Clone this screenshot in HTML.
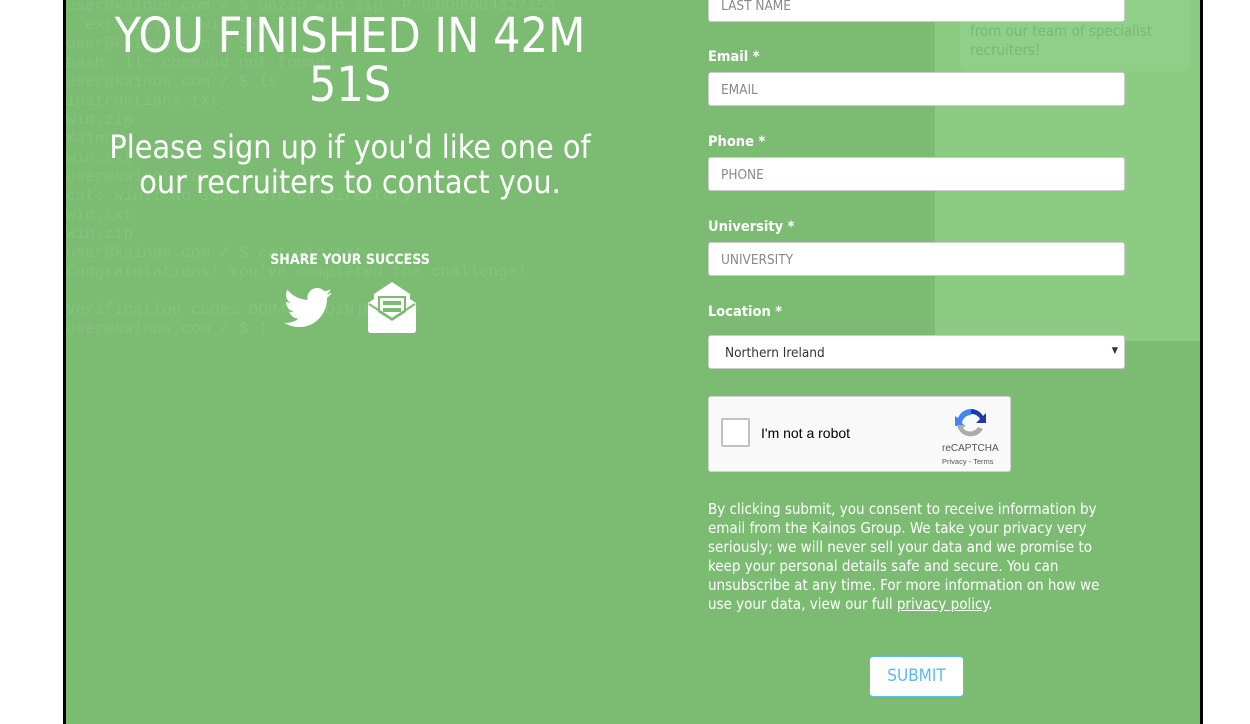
<!DOCTYPE html>
<html><head><meta charset="utf-8"><style>
*{box-sizing:border-box;margin:0;padding:0}
body{width:1250px;height:724px;background:#fff;position:relative;overflow:hidden;font-family:"DejaVu Sans Condensed","Liberation Sans",sans-serif}
#main{position:absolute;left:63px;top:0;width:1140px;height:724px;background:#7bbb72;border-left:3px solid #000;border-right:3px solid #000}
#panel{position:absolute;left:935px;top:0;width:265px;height:341px;background:#8bcb82}
#box{position:absolute;left:960px;top:-20px;width:230px;height:91px;background:#90cf87;border-radius:8px;color:#7bb872;font-size:15px;line-height:19px;padding:23px 10px 0}
#term{position:absolute;left:66px;top:-3px;font-family:"Liberation Mono",monospace;font-size:16px;line-height:19px;color:rgba(255,255,255,.09);white-space:pre}
.c{position:absolute;left:66px;width:568px;text-align:center;color:#fff}
h1{font-weight:normal;font-size:48px;line-height:49px;top:12px}
.sub{font-size:32px;line-height:35px;top:130px}
.share{top:252px;font-size:14px;font-weight:bold}
label{position:absolute;left:708px;color:#fff;font-weight:bold;font-size:14.5px}
.in{position:absolute;left:708px;width:417px;height:34px;background:#fff;border:1px solid #ccc;border-radius:3px;color:#888;font-size:13.5px;padding:9px 12px}
.cap{position:absolute;left:708px;top:396px;width:303px;height:76px;background:#f9f9f9;border:1px solid #d3d3d3;border-radius:3px;font-family:"Liberation Sans",sans-serif}
.txt{position:absolute;left:708px;top:500px;width:412px;color:#fff;font-size:15px;line-height:19px}
.btn{position:absolute;left:869px;top:656px;width:95px;height:41px;background:#fff;border:1px solid #5bbbe8;border-radius:4px;color:#5bbbe8;font-size:17px;text-align:center;line-height:39px}
</style></head><body>
<div id="main"></div>
<div id="panel"></div>
<div id="box">ion<br>from our team of specialist<br>recruiters!</div>
<div id="term">user@kainos.com / $ unzip win.zip -P 83886084327153
  extracting: win.txt
user@kainos.com / $ ll
bash: ll: command not found
user@kainos.com / $ ls
instructions.txt
win.zip
Kainos
win.txt
user@kainos.com / $ cat win.
cat: win.: No such file or directory
win.txt
win.zip
user@kainos.com / $ cat win.txt
Congratulations! You've completed the challenge!

Verification code: ODM4NzODQzNjExNTM=
user@kainos.com / $ |</div>
<h1 class="c">YOU FINISHED IN 42M<br>51S</h1>
<div class="c sub">Please sign up if you'd like one of<br>our recruiters to contact you.</div>
<div class="c share">SHARE YOUR SUCCESS</div>
<svg style="position:absolute;left:283px;top:288px" width="50" height="40" viewBox="0 0 24 20"><path fill="#fff" d="M24 2.4c-.9.4-1.8.7-2.8.8 1-.6 1.8-1.6 2.2-2.7-1 .6-2 1-3.1 1.2C19.3.7 18 0 16.6 0c-2.7 0-4.9 2.2-4.9 4.9 0 .4 0 .8.1 1.1C7.7 5.8 4.1 3.900 1.7.9c-.4.7-.7 1.6-.7 2.5 0 1.7.9 3.2 2.2 4.1-.8 0-1.600-.2-2.2-.6v.1c0 2.4 1.7 4.4 3.9 4.8-.4.1-.8.2-1.3.2-.3 0-.6 0-.9-.1.6 2 2.4 3.4 4.6 3.4-1.7 1.3-3.8 2.1-6.1 2.1-.4 0-.8 0-1.2-.1 2.2 1.4 4.8 2.2 7.5 2.2 9.1 0 14-7.5 14-14v-.6c1-.7 1.8-1.6 2.5-2.5z"/></svg>
<svg style="position:absolute;left:366px;top:282px" width="52" height="52" viewBox="0 0 52 52"><path fill="#fff" d="M26 0 L8 12 V17 L2 21 V48 Q2 51 5 51 H47 Q50 51 50 48 V21 L44 17 V12 Z"/><path fill="#7bbb72" d="M12 14 H40 V30 L26 39 L12 30 Z"/><path fill="#fff" d="M14 16 H38 V29 L26 37 L14 29 Z"/><rect x="17" y="19" width="18" height="4" fill="#7bbb72"/><rect x="17" y="26" width="18" height="4" fill="#7bbb72"/><path fill="none" stroke="#7bbb72" stroke-width="2" d="M3 22 L26 37 L49 22"/></svg>
<div class="in" style="top:-12px">LAST NAME</div>
<label style="top:49px">Email *</label><div class="in" style="top:72px">EMAIL</div>
<label style="top:134px">Phone *</label><div class="in" style="top:157px">PHONE</div>
<label style="top:219px">University *</label><div class="in" style="top:242px">UNIVERSITY</div>
<label style="top:304px">Location *</label><div class="in" style="top:335px;color:#333;padding-left:16px">Northern Ireland<span style="position:absolute;right:6px;top:10px;font-size:9px">▼</span></div>
<div class="cap"><div style="position:absolute;left:12px;top:21px;width:29px;height:29px;border:2px solid #c1c1c1;border-radius:2px;background:#fff"></div><div style="position:absolute;left:52px;top:28px;font-size:14px;color:#000">I'm not a robot</div>
<svg style="position:absolute;left:246px;top:10px" width="32" height="32" viewBox="0 0 32 32"><path d="M16 2a14 14 0 0 1 12 7l3-3v10H21l4-4a9 9 0 0 0-9-5z" fill="#1c3aa9"/><path d="M16 2A14 14 0 0 0 3 11l-3-2v10h10l-3-3a9 9 0 0 1 9-8z" fill="#4285f4"/><path d="M2 18a14 14 0 0 0 26 4l-5-2a9 9 0 0 1-15 1l3-3z" fill="#ababab"/></svg>
<div style="position:absolute;left:233px;top:46px;font-size:10px;color:#555">reCAPTCHA</div><div style="position:absolute;left:233px;top:60px;font-size:7.5px;color:#555">Privacy - Terms</div></div>
<div class="txt">By clicking submit, you consent to receive information by email from the Kainos Group. We take your privacy very seriously; we will never sell your data and we promise to keep your personal details safe and secure. You can unsubscribe at any time. For more information on how we use your data, view our full <u>privacy policy</u>.</div>
<div class="btn">SUBMIT</div>
</body></html>
